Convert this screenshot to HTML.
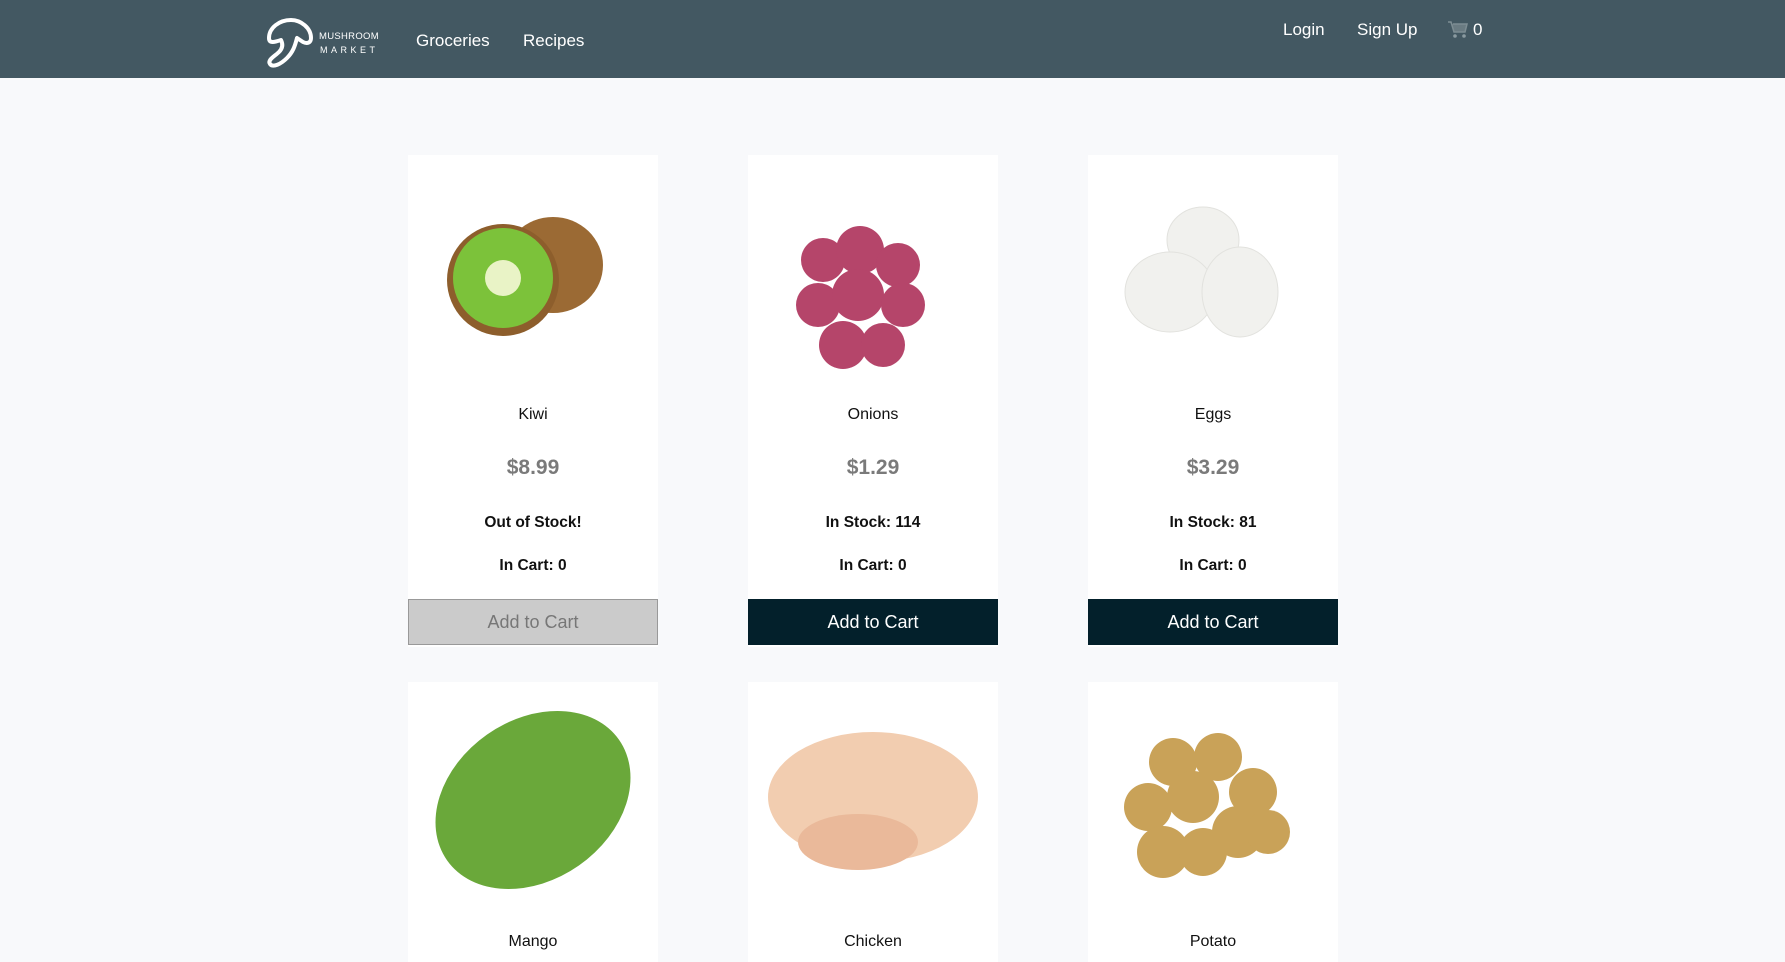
<!DOCTYPE html>
<html><head><meta charset="utf-8"><style>
*{margin:0;padding:0;box-sizing:border-box}
body{width:1785px;height:957px;overflow:hidden;background:#f8f9fb;font-family:"Liberation Sans",sans-serif;position:relative}
.hdr{position:absolute;left:0;top:0;width:1785px;height:78px;background:#435862}
.nav{position:absolute;color:#fff;font-size:17px;}
.card{position:absolute;width:250px;background:#fff;text-align:center;color:#111}
.card .img{height:235px;position:relative}
.nm{position:absolute;width:100%;font-size:16px}
.pr{position:absolute;width:100%;font-size:21px;font-weight:bold;color:#7a7a7a}
.st{position:absolute;width:100%;font-size:15.5px;font-weight:bold}
.btn{position:absolute;left:0;width:250px;height:46px;line-height:46px;font-size:18px;color:#fff;background:#03202b}
.btn.dis{background:#cbcbcb;color:#777;border:1px solid #999;line-height:44px}
</style></head><body>
<div class="hdr">
<svg style="position:absolute;left:265px;top:16px" width="52" height="54" viewBox="0 0 52 54"><path d="M4 22 C4 12 14 4 26 4 C36 4 46 12 46 22 C46 27 42 28 38 26 L32 22 C30 30 28 36 22 42 C16 48 8 52 5 48 C2 44 10 40 14 36 C18 32 18 28 16 24 C10 26 4 28 4 22 Z" fill="none" stroke="#fff" stroke-width="4" stroke-linejoin="round"/></svg>
<div class="nav" style="left:319px;top:31px;font-size:9.5px;letter-spacing:0.3px">MUSHROOM</div>
<div class="nav" style="left:320px;top:45px;font-size:9px;letter-spacing:3.5px">MARKET</div>
<div class="nav" style="left:416px;top:31px">Groceries</div>
<div class="nav" style="left:523px;top:31px">Recipes</div>
<div class="nav" style="left:1283px;top:20px">Login</div>
<div class="nav" style="left:1357px;top:20px">Sign Up</div>
<svg style="position:absolute;left:1447px;top:20px" width="22" height="20" viewBox="0 0 22 20"><path d="M1 2h3l3 10h11l2-8H6" fill="#6a7b82" stroke="#7d8d93" stroke-width="1.5"/><circle cx="8" cy="16" r="1.8" fill="#8a9aa0"/><circle cx="17" cy="16" r="1.8" fill="#8a9aa0"/></svg>
<div class="nav" style="left:1473px;top:20px">0</div>
</div>

<div class="card" style="left:408px;top:155px;height:492px">
<svg class="img" width="250" height="235" viewBox="0 0 250 235"><ellipse cx="145" cy="110" rx="50" ry="48" fill="#9b6a34"/><ellipse cx="95" cy="125" rx="56" ry="56" fill="#8d5e2c"/><ellipse cx="95" cy="123" rx="50" ry="50" fill="#7cc23a"/><ellipse cx="95" cy="123" rx="18" ry="18" fill="#e9f3c6"/></svg>
<div class="nm" style="top:251px">Kiwi</div>
<div class="pr" style="top:301px">$8.99</div>
<div class="st" style="top:359px">Out of Stock!</div>
<div class="st" style="top:402px">In Cart: 0</div>
<div class="btn dis" style="top:444px">Add to Cart</div>
</div>

<div class="card" style="left:748px;top:155px;height:492px">
<svg class="img" width="250" height="235" viewBox="0 0 250 235"><g fill="#b5456a"><circle cx="75" cy="105" r="22"/><circle cx="112" cy="95" r="24"/><circle cx="150" cy="110" r="22"/><circle cx="70" cy="150" r="22"/><circle cx="110" cy="140" r="26"/><circle cx="155" cy="150" r="22"/><circle cx="95" cy="190" r="24"/><circle cx="135" cy="190" r="22"/></g></svg>
<div class="nm" style="top:251px">Onions</div>
<div class="pr" style="top:301px">$1.29</div>
<div class="st" style="top:359px">In Stock: 114</div>
<div class="st" style="top:402px">In Cart: 0</div>
<div class="btn" style="top:444px">Add to Cart</div>
</div>

<div class="card" style="left:1088px;top:155px;height:492px">
<svg class="img" width="250" height="235" viewBox="0 0 250 235"><g fill="#f1f1ee" stroke="#e2e2de"><ellipse cx="115" cy="85" rx="36" ry="33"/><ellipse cx="82" cy="137" rx="45" ry="40"/><ellipse cx="152" cy="137" rx="38" ry="45"/></g></svg>
<div class="nm" style="top:251px">Eggs</div>
<div class="pr" style="top:301px">$3.29</div>
<div class="st" style="top:359px">In Stock: 81</div>
<div class="st" style="top:402px">In Cart: 0</div>
<div class="btn" style="top:444px">Add to Cart</div>
</div>

<div class="card" style="left:408px;top:682px;height:280px">
<svg class="img" width="250" height="235" viewBox="0 0 250 235"><ellipse cx="125" cy="118" rx="105" ry="80" transform="rotate(-35 125 118)" fill="#6aa83a"/></svg>
<div class="nm" style="top:251px">Mango</div>
</div>
<div class="card" style="left:748px;top:682px;height:280px">
<svg class="img" width="250" height="235" viewBox="0 0 250 235"><ellipse cx="125" cy="115" rx="105" ry="65" fill="#f2cdb0"/><ellipse cx="110" cy="160" rx="60" ry="28" fill="#eab99a"/></svg>
<div class="nm" style="top:251px">Chicken</div>
</div>
<div class="card" style="left:1088px;top:682px;height:280px">
<svg class="img" width="250" height="235" viewBox="0 0 250 235"><g fill="#c9a258"><circle cx="85" cy="80" r="24"/><circle cx="130" cy="75" r="24"/><circle cx="165" cy="110" r="24"/><circle cx="60" cy="125" r="24"/><circle cx="105" cy="115" r="26"/><circle cx="150" cy="150" r="26"/><circle cx="75" cy="170" r="26"/><circle cx="115" cy="170" r="24"/><circle cx="180" cy="150" r="22"/></g></svg>
<div class="nm" style="top:251px">Potato</div>
</div>
</body></html>
